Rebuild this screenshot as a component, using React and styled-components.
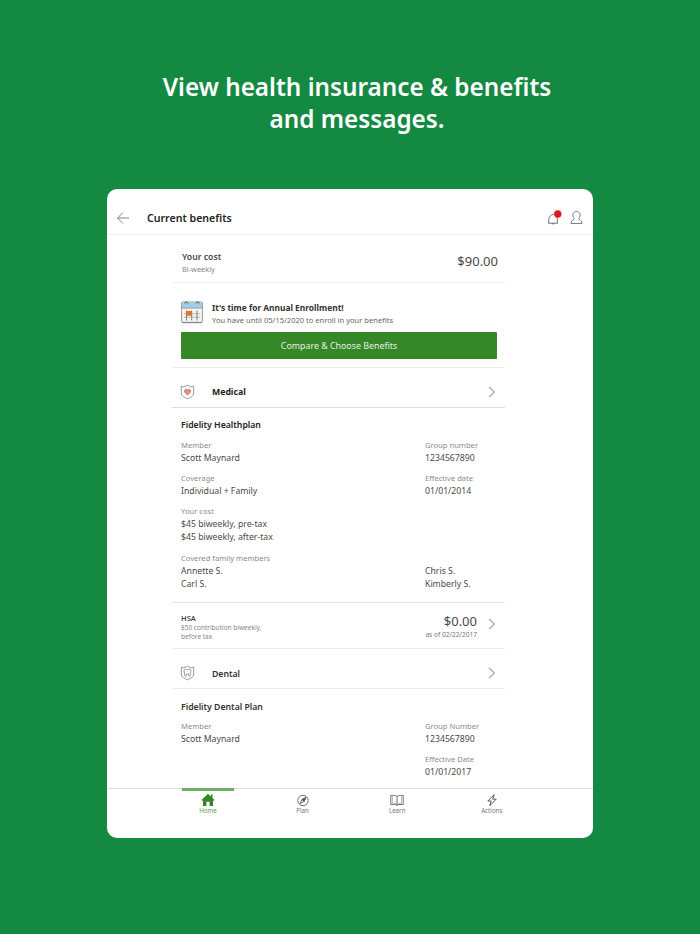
import React from 'react';
import styled, { createGlobalStyle } from 'styled-components';

const GlobalStyle = createGlobalStyle`
  * {
    box-sizing: border-box;
  }

  body {
    margin: 0;
    background: #148942;
    font-family: 'Noto Sans', 'Open Sans', sans-serif;
  }
`;

const Page = styled.main`
  display: flex;
  flex-direction: column;
  align-items: center;
  height: 934px;
  padding-top: 71px;
  overflow: hidden;
`;

const Headline = styled.h1`
  margin: 0 0 0 14px;
  height: 118px;
  color: #fff;
  font-size: 24.3px;
  font-weight: 600;
  line-height: 32px;
  text-align: center;
  white-space: nowrap;
`;

const Card = styled.section`
  display: flex;
  flex-direction: column;
  width: 486px;
  height: 649px;
  border-radius: 10px;
  background: #fff;
  overflow: hidden;
`;

const Text = styled.div`
  color: ${props => props.$color || '#4a4a4a'};
  font-size: ${props => props.$size || 8.7}px;
  font-weight: ${props => props.$weight || 400};
  line-height: ${props => props.$line || 13}px;
  white-space: nowrap;
`;

const Header = styled.header`
  display: flex;
  align-items: center;
  height: 46px;
  padding: 13px 10px 0 9px;
  border-bottom: 1px solid #efefef;
`;

const Title = styled(Text)`
  flex: 1;
  margin-left: 17px;
`;

const HeaderIcons = styled.div`
  display: flex;
  gap: 8px;
`;

const Content = styled.div`
  width: 333px;
  height: 553px;
  margin-left: 65px;
`;

const Row = styled.div`
  display: flex;
  align-items: center;
  height: ${props => props.$height}px;
  padding: ${props => props.$pad || '0 8px'};
  border-bottom: 1px solid ${props => props.$line || '#eee'};
`;

const Grow = styled.div`
  flex: 1;
`;

const CostLabels = styled(Grow)`
  padding-top: 3px;
`;

const Enrollment = styled.div`
  height: 85px;
  padding: 17px 8px 0 9px;
  border-bottom: 1px solid #eee;
`;

const Notice = styled.div`
  display: flex;
  gap: 9px;
  height: 32px;
`;

const Button = styled.button`
  display: block;
  width: 316px;
  height: 27px;
  padding: 0;
  border: 0;
  border-radius: 1px;
  background: #368727;
  color: #e3efe0;
  font: 400 8.85px/26px 'Noto Sans', sans-serif;
`;

const RowTitle = styled(Text)`
  flex: 1;
  margin-left: 17px;
  padding-top: ${props => props.$drop || 0}px;
`;

const Plan = styled.section`
  height: ${props => props.$height}px;
  padding: 11px 9px 0;
  border-bottom: ${props => (props.$last ? '0' : '1px solid #e4e4e4')};
`;

const PlanTitle = styled(Text)`
  padding-top: ${props => props.$drop || 0}px;
  height: 13px;
`;

const Fields = styled.div`
  display: grid;
  grid-template-columns: 244px 1fr;
  row-gap: 7px;
  margin-top: 7px;
`;

const FieldBox = styled.div`
  padding-top: ${props => (props.$spaced ? 1 : 0)}px;
`;

const FieldValues = styled.div`
  padding-top: 1px;
`;

const Amount = styled.div`
  margin-right: 10px;
  text-align: right;
`;

const AmountLink = styled.div`
  display: flex;
  align-items: center;

  svg {
    margin-bottom: 6px;
  }
`;

const Nav = styled.nav`
  display: grid;
  grid-template-columns: 52px 52px 52px 52px;
  column-gap: 42.6px;
  height: 50px;
  padding-left: 75px;
  border-top: 1px solid #dedede;
`;

const NavItem = styled.div`
  display: flex;
  flex-direction: column;
  align-items: center;
  margin-top: -1px;
  padding-top: 2px;
  border-top: 3px solid ${props => (props.$active ? '#74ad69' : 'transparent')};
`;

const BackIcon = () => (
  <svg width="14" height="14" viewBox="0 0 14 14" fill="none" stroke="#777" strokeWidth="0.9">
    <path d="M13 7H1.5M7 1.5L1.5 7L7 12.5" />
  </svg>
);

const BellIcon = () => (
  <svg width="15" height="16" viewBox="0 0 15 16" fill="none" stroke="#666" strokeWidth="0.9">
    <path d="M1.800 13V8.500C2 6.500 4 4.800 6.300 4.300C8.500 4.500 10.300 6 10.300 8.500V13" />
    <path d="M1 13.200H11M4.500 13.800H7.500" />
    <circle cx="10.800" cy="4" r="3.700" fill="#dc1c1c" stroke="none" />
  </svg>
);

const UserIcon = () => (
  <svg width="13" height="16" viewBox="0 0 13 16" fill="none" stroke="#707070" strokeWidth="0.9">
    <path d="M4.300 8.500C1.500 5.500 3 1.500 6.500 1.500S11.500 5.500 8.700 8.500C8.300 9 8.500 9.400 9.300 9.700C11 10.300 12 11.500 12 13.500H1C1 11.500 2 10.300 3.700 9.700C4.500 9.400 4.700 9 4.300 8.500Z" />
  </svg>
);

const CalendarIcon = () => (
  <svg width="22" height="24" viewBox="0 0 22 24" fill="none">
    <rect x="0.600" y="2" width="20.800" height="20.500" rx="1" fill="#f7f6f4" stroke="#9a9a9a" />
    <path d="M1 2.500H21V7.500H1Z" fill="#9bd0e6" />
    <path d="M1 8H21" stroke="#777" strokeWidth="0.8" />
    <path d="M5.500 10.500V20.500M10.700 10.500V20.500M16 10.500V20.500" stroke="#777" />
    <path d="M3 13.700H19M3 17.200H19" stroke="#a5a5a5" strokeWidth="0.8" />
    <rect x="5.200" y="11" width="5.500" height="4.700" fill="#e8702a" />
    <path d="M3.800 3.500A1.600 1.600 0 1 1 7 3.500M15 3.500A1.600 1.600 0 1 1 18.200 3.500" stroke="#555" />
    <path d="M1 22.500H21" stroke="#888" strokeWidth="1.300" />
  </svg>
);

const ShieldIcon = ({ dental }) => (
  <svg width="15" height="16" viewBox="0 0 15 16" fill="none" stroke="#8f8f8f" strokeWidth="0.9">
    <path d="M1.300 2L3.500 3L7.500 1.200L11.500 3L13.700 2V10C13 12.500 10 13.500 7.500 14.800C5 13.500 2 12.500 1.300 10Z" />
    {dental ? (
      <path d="M4.500 4.500C6 3.500 6.500 5 7.500 4.700C8.500 5 9 3.500 10.500 4.500C11.500 6 10.500 7.500 10.300 9.500C10 12.500 8.800 12 8.500 9H6.500C6.200 12 5 12.500 4.700 9.500C4.500 7.500 3.500 6 4.500 4.500Z" />
    ) : (
      <path
        d="M7.500 6C6.500 4.500 4.300 5.200 4.500 7.200C4.700 8.900 6.500 10 7.500 10.800C8.500 10 10.300 8.900 10.500 7.200C10.700 5.200 8.500 4.500 7.500 6Z"
        fill="#e58f8f"
        stroke="#b97070"
      />
    )}
  </svg>
);

const Chevron = () => (
  <svg width="9" height="14" viewBox="0 0 9 14" fill="none" stroke="#a5a5a5" strokeWidth="1.100">
    <path d="M2 2L7.500 7L2 12" />
  </svg>
);

const HomeIcon = () => (
  <svg width="14" height="14" viewBox="0 0 14 14" fill="#368727">
    <path d="M7 0.800L9.800 3.400V1.500H11.500V5L13.500 7L12.500 8L12 7.600V13H8.600V8.800H5.400V13H2V7.600L1.500 8L0.500 7Z" />
  </svg>
);

const CompassIcon = () => (
  <svg width="14" height="14" viewBox="0 0 14 14" fill="none" stroke="#606060" strokeWidth="0.9">
    <circle cx="7" cy="7.500" r="5.200" />
    <path d="M10 4.500L8 8.500L4 10.500L6 6.500Z" />
    <path d="M10 4.500L8 8.500L6 6.500Z" fill="#444" />
  </svg>
);

const BookIcon = () => (
  <svg width="14" height="14" viewBox="0 0 14 14" fill="none" stroke="#606060" strokeWidth="0.9">
    <path d="M7 3.500C5.500 2.300 4 2.300 2.500 2.500H0.800V11.500H5.500L7 12.500L8.500 11.500H13.200V2.500H11.500C10 2.300 8.500 2.300 7 3.500V12" />
    <path d="M2.500 2.500V10.200C4 10.100 5.500 10.300 7 11.500C8.500 10.300 10 10.100 11.500 10.200V2.500" strokeWidth="0.400" />
  </svg>
);

const BoltIcon = () => (
  <svg width="14" height="14" viewBox="0 0 14 14" fill="none" stroke="#4a4a4a" strokeWidth="0.9">
    <path d="M9.300 1.500L2.800 8H6.200L4.800 12.800L11.200 6.200H7.700Z" />
  </svg>
);

function Field({ label, values, spaced }) {
  return (
    <FieldBox $spaced={spaced}>
      <Text $size={7.6} $line={12} $color="#8b8b8b">{label || '\u00a0'}</Text>
      <FieldValues>
        {values.map(value => (
          <Text key={value}>{value}</Text>
        ))}
      </FieldValues>
    </FieldBox>
  );
}

function App() {
  return (
    <Page>
      <GlobalStyle />
      <Headline>
        View health insurance &amp; benefits
        <br />
        and messages.
      </Headline>
      <Card>
        <Header>
          <BackIcon />
          <Title $size={10.6} $weight={600} $color="#222">Current benefits</Title>
          <HeaderIcons>
            <BellIcon />
            <UserIcon />
          </HeaderIcons>
        </Header>
        <Content>
          <Row $height={48} $pad="5px 7px 0 10px">
            <CostLabels>
              <Text $weight={600} $line={12}>Your cost</Text>
              <Text $size={7.4} $line={12} $color="#888">Bi-weekly</Text>
            </CostLabels>
            <Text $size={13}>$90.00</Text>
          </Row>
          <Enrollment>
            <Notice>
              <CalendarIcon />
              <div>
                <Text $weight={700} $size={8.4} $line={15} $color="#333">It's time for Annual Enrollment!</Text>
                <Text $size={7.55} $line={10} $color="#666">You have until 05/15/2020 to enroll in your benefits</Text>
              </div>
            </Notice>
            <Button>Compare &amp; Choose Benefits</Button>
          </Enrollment>
          <Row $height={40} $pad="9px 9px 0 8px" $line="#ddd">
            <ShieldIcon />
            <RowTitle $weight={700} $color="#222">Medical</RowTitle>
            <Chevron />
          </Row>
          <Plan $height={195}>
            <PlanTitle $weight={600} $color="#222">Fidelity Healthplan</PlanTitle>
            <Fields>
              <Field label="Member" values={['Scott Maynard']} />
              <Field label="Group number" values={['1234567890']} />
              <Field label="Coverage" values={['Individual + Family']} />
              <Field label="Effective date" values={['01/01/2014']} />
              <Field label="Your cost" values={['$45 biweekly, pre-tax', '$45 biweekly, after-tax']} />
              <div />
              <Field spaced label="Covered family members" values={['Annette S.', 'Carl S.']} />
              <Field spaced values={['Chris S.', 'Kimberly S.']} />
            </Fields>
          </Plan>
          <Row $height={46} $pad="2px 9px 0 9px">
            <Grow>
              <Text $size={7.5} $weight={600} $line={10}>HSA</Text>
              <Text $size={6.5} $line={9} $color="#888">$50 contribution biweekly,</Text>
              <Text $size={6.5} $line={9} $color="#888">before tax</Text>
            </Grow>
            <AmountLink>
              <Amount>
                <Text $size={13} $line={16}>$0.00</Text>
                <Text $size={6.6} $line={11} $color="#777">as of 02/22/2017</Text>
              </Amount>
              <Chevron />
            </AmountLink>
          </Row>
          <Row $height={40} $pad="9px 9px 0 8px">
            <ShieldIcon dental />
            <RowTitle $drop={2} $weight={600} $color="#333">Dental</RowTitle>
            <Chevron />
          </Row>
          <Plan $height={99} $last>
            <PlanTitle $drop={1} $weight={600} $color="#333">Fidelity Dental Plan</PlanTitle>
            <Fields>
              <Field label="Member" values={['Scott Maynard']} />
              <Field label="Group Number" values={['1234567890']} />
              <div />
              <Field label="Effective Date" values={['01/01/2017']} />
            </Fields>
          </Plan>
        </Content>
        <Nav>
          <NavItem $active>
            <HomeIcon />
            <Text $size={6.2} $line={8} $color="#5a9d4e">Home</Text>
          </NavItem>
          <NavItem>
            <CompassIcon />
            <Text $size={6.2} $line={8} $color="#777">Plan</Text>
          </NavItem>
          <NavItem>
            <BookIcon />
            <Text $size={6.2} $line={8} $color="#777">Learn</Text>
          </NavItem>
          <NavItem>
            <BoltIcon />
            <Text $size={6.2} $line={8} $color="#777">Actions</Text>
          </NavItem>
        </Nav>
      </Card>
    </Page>
  );
}

export default App;
